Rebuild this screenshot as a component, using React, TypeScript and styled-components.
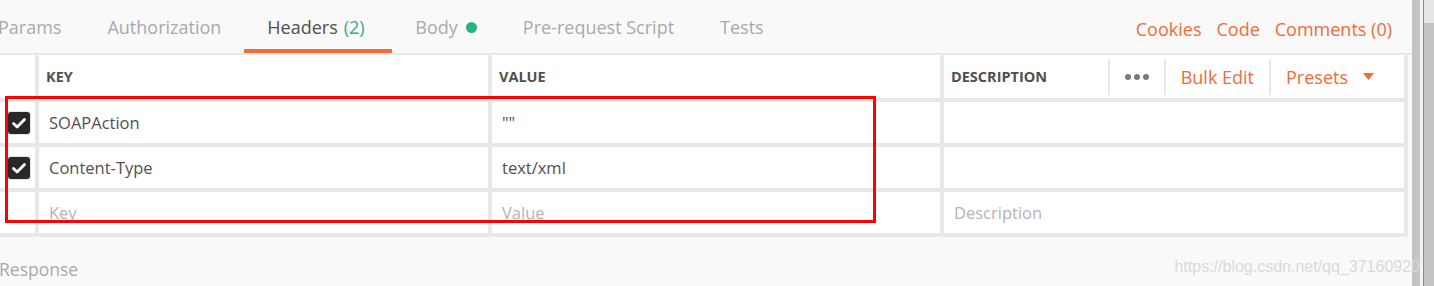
import styled, { createGlobalStyle } from "styled-components";

const GlobalStyle = createGlobalStyle`
    body {
        margin: 0;
        overflow: hidden;
        font-family: "Open Sans", "Liberation Sans", sans-serif;
    }
`;

const Page = styled.div`
    position: relative;
    width: 1434px;
    height: 286px;
    display: flex;
    background-color: #f9f9f9;
    overflow: hidden;
`;

const Main = styled.div`
    width: 1412px;
    display: flex;
    flex-direction: column;
`;

const TabBar = styled.div`
    height: 53px;
    display: flex;
    justify-content: space-between;
    border-bottom: 2px solid #e8e8e8;
`;

const Tabs = styled.div`
    display: flex;
    margin-left: -25px;
`;

const Tab = styled.div<{ active?: boolean }>`
    display: flex;
    align-items: center;
    padding: 5px 23px 0 23px;
    font-size: 18px;
    color: ${props => (props.active ? "#505050" : "#a9a9a9")};
    border-bottom: 4px solid ${props => (props.active ? "#f26b3a" : "transparent")};
`;

const Count = styled.span`
    color: #26b47f;
    margin-left: 6px;
`;

const Dot = styled.span`
    width: 11px;
    height: 11px;
    border-radius: 50%;
    margin-left: 8px;
    background-color: #26b47f;
`;

const Links = styled.div`
    display: flex;
    align-items: center;
    gap: 15px;
    padding: 4px 20px 0 0;
`;

const OrangeLink = styled.span`
    font-size: 18px;
    color: #f26b3a;
`;

const Table = styled.div`
    display: grid;
    width: max-content;
    grid-template-columns: 35px 449px 448px 460px;
    grid-template-rows: 43px 41px 41px 41px;
    gap: 4px;
    padding: 0 4px 4px 0;
    background-color: #e8e8e8;
`;

const HeadCell = styled.div`
    display: flex;
    align-items: center;
    justify-content: space-between;
    padding-left: 7px;
    background-color: #fff;
    font-size: 14.5px;
    font-weight: 700;
    color: #505050;
    text-transform: uppercase;
`;

const Cell = styled.div<{ placeholder?: boolean }>`
    display: flex;
    align-items: center;
    padding: 0 10px;
    background-color: #fff;
    font-size: 16.5px;
    color: ${props => (props.placeholder ? "#b4b4b4" : "#505050")};
`;

const CheckCell = styled.div`
    display: flex;
    align-items: center;
    justify-content: center;
    padding-left: 2px;
    background-color: #fff;
`;

const CheckBox = styled.div`
    width: 22px;
    height: 22px;
    border-radius: 3px;
    background-color: #282828;
    box-shadow: 0 0 0 1px #e4e4e4;
    display: flex;
    align-items: center;
    justify-content: center;
`;

const Actions = styled.div`
    display: flex;
    align-items: center;
    height: 36px;
    padding-right: 15px;
`;

const Action = styled.div`
    display: flex;
    align-items: center;
    gap: 15px;
    height: 100%;
    padding: 0 15px;
    border-left: 2px solid #e8e8e8;
    font-size: 18px;
    font-weight: 400;
    text-transform: none;
    color: #f26b3a;
`;

const Footer = styled.div`
    padding: 20px 0 0 0;
    margin-left: -1px;
    font-size: 17.5px;
    color: #a9a9a9;
`;

const ScrollArea = styled.div`
    flex: 1;
    display: flex;
`;

const Track = styled.div<{ w: number; color: string; topColor?: string }>`
    width: ${props => props.w}px;
    background: linear-gradient(
        ${props => props.topColor || props.color} 0 23px,
        ${props => props.color} 23px
    );
`;

const Highlight = styled.div`
    position: absolute;
    left: 5px;
    top: 96px;
    width: 865px;
    height: 121px;
    border: 3px solid #ff0000;
    pointer-events: none;
`;

const Watermark = styled.div`
    position: absolute;
    right: 14px;
    top: 258px;
    font-family: "Liberation Sans", Arial, sans-serif;
    font-size: 16px;
    color: #dadada;
`;

function Check() {
    return (
        <CheckBox>
            <svg width="18" height="18" viewBox="0 0 18 18">
                <path d="M3.5 9.5l3.6 3.6L14.5 5.5" fill="none" stroke="#fff" strokeWidth="2.8" strokeLinecap="round" strokeLinejoin="round" />
            </svg>
        </CheckBox>
    );
}

function Dots() {
    return (
        <svg width="24" height="8" viewBox="0 0 24 8">
            <circle cx="3" cy="4" r="3" fill="#7a7a7a" />
            <circle cx="12" cy="4" r="3" fill="#7a7a7a" />
            <circle cx="21" cy="4" r="3" fill="#7a7a7a" />
        </svg>
    );
}

function Caret() {
    return (
        <svg width="11" height="8" viewBox="0 0 11 8">
            <path d="M0 0h11L5.5 7z" fill="#f26b3a" />
        </svg>
    );
}

const rows = [
    { key: "SOAPAction", value: "\"\"" },
    { key: "Content-Type", value: "text/xml" },
];

function App() {
    return (
        <>
            <GlobalStyle />
            <Page>
                <Main>
                    <TabBar>
                        <Tabs>
                            <Tab>Params</Tab>
                            <Tab>Authorization</Tab>
                            <Tab active>Headers<Count>(2)</Count>&nbsp;</Tab>
                            <Tab>Body<Dot /></Tab>
                            <Tab>Pre-request Script</Tab>
                            <Tab>Tests</Tab>
                        </Tabs>
                        <Links>
                            <OrangeLink>Cookies</OrangeLink>
                            <OrangeLink>Code</OrangeLink>
                            <OrangeLink>Comments (0)</OrangeLink>
                        </Links>
                    </TabBar>
                    <Table>
                        <CheckCell />
                        <HeadCell>Key</HeadCell>
                        <HeadCell>Value</HeadCell>
                        <HeadCell>
                            Description
                            <Actions>
                                <Action><Dots /></Action>
                                <Action>Bulk Edit</Action>
                                <Action>Presets<Caret /></Action>
                            </Actions>
                        </HeadCell>
                        {rows.map(r => (
                            <>
                                <CheckCell key={r.key + "c"}><Check /></CheckCell>
                                <Cell key={r.key}>{r.key}</Cell>
                                <Cell key={r.key + "v"}>{r.value}</Cell>
                                <Cell key={r.key + "d"} />
                            </>
                        ))}
                        <CheckCell />
                        <Cell placeholder>Key</Cell>
                        <Cell placeholder>Value</Cell>
                        <Cell placeholder>Description</Cell>
                    </Table>
                    <Footer>Response</Footer>
                </Main>
                <ScrollArea>
                    <Track w={8} color="#c3c3c3" />
                    <Track w={3} color="#f2f2f2" />
                    <Track w={1} color="#8a8a8a" />
                    <Track w={10} color="#c4c4c4" topColor="#e6e6e6" />
                </ScrollArea>
                <Highlight />
                <Watermark>https://blog.csdn.net/qq_37160920</Watermark>
            </Page>
        </>
    );
}

export default App;
